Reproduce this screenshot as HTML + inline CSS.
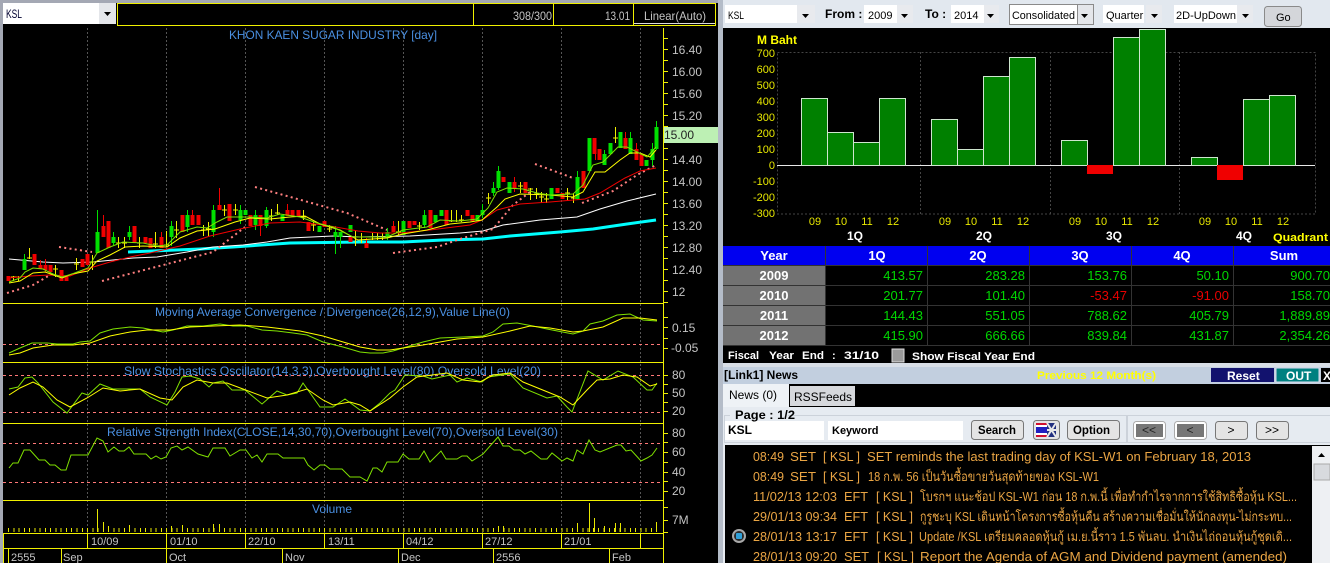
<!DOCTYPE html>
<html><head><meta charset="utf-8"><title>KSL</title>
<style>
html,body{margin:0;padding:0;background:#000;width:1330px;height:563px;overflow:hidden}
svg{display:block;font-family:"Liberation Sans","Noto Sans CJK SC",sans-serif}
.c{shape-rendering:crispEdges}
.t{fill:#4a90e2;font-size:12px}
.ax{fill:#c4c4c4;font-size:12px}
.dt{fill:#c4c4c4;font-size:11px}
.by{fill:#e8e800;font-size:11px}
.ty{fill:#e8e800;font-size:11px}
.q{fill:#fff;font-size:12px;font-weight:bold}
.th{fill:#fff;font-size:13px;font-weight:bold;text-anchor:middle}
.v{fill:#00d800;font-size:13px;text-anchor:end}
.r{fill:#e80000;font-size:13px;text-anchor:end}
.n{fill:#eaa544;font-size:13px}
.b{fill:#000;font-size:12px;font-weight:bold}
.k{fill:#000;font-size:11px}
.f{fill:#fff;font-size:11px;font-weight:bold}
</style></head><body>
<svg width="1330" height="563" viewBox="0 0 1330 563" xmlns="http://www.w3.org/2000/svg">
<rect width="1330" height="563" fill="#000"/>
<!-- frames -->
<g class="c">
<rect width="1330" height="3" fill="#a4a8b4"/>
<rect width="3" height="563" fill="#a4a8b4"/>
<rect x="718" width="5" height="563" fill="#b4bcc8"/>
<rect x="3" y="3" width="113" height="21" fill="#fff"/>
<rect x="99" y="3" width="17" height="21" fill="#e4e6ea"/>
<rect x="117.500" y="3.500" width="598" height="22" fill="none" stroke="#f0f000"/>
<path d="M473.500 3V25M553.500 3V25M633.500 3V25" stroke="#f0f000"/>
<path d="M634 23.500H715" stroke="#ddd"/>
</g>
<path d="M104 12h7l-3.500 4z" fill="#000"/>
<text x="6" y="18" font-size="12" fill="#000030" textLength="16" lengthAdjust="spacingAndGlyphs">KSL</text>
<text x="513" y="20" font-size="12" fill="#c4c4c4" textLength="39" lengthAdjust="spacingAndGlyphs">308/300</text>
<text x="605" y="20" font-size="12" fill="#c4c4c4" textLength="25" lengthAdjust="spacingAndGlyphs">13.01</text>
<text x="644" y="20" font-size="12" fill="#c4c4c4" textLength="62" lengthAdjust="spacingAndGlyphs">Linear(Auto)</text>
<!-- grid -->
<path d="M87.500 28V533M166.500 28V533M245.500 28V533M324.500 28V533M403.500 28V533M482.500 28V533M561.500 28V533M640.500 28V533" stroke="#555" stroke-dasharray="2 2" class="c"/>
<!-- panel lines -->
<path class="c" d="M3 303.500H663M3 362.500H663M3 423.500H663M3 500.500H663M3 533.500H663M3 548.500H663M663.500 28V563M3.500 533V563M8.500 548V563" stroke="#f0f000"/>
<path class="c" d="M87.500 533V548M166.500 533V548M245.500 533V548M324.500 533V548M403.500 533V548M482.500 533V548M561.500 533V548M640.500 533V548M61.500 548V563M166.500 548V563M282.500 548V563M398.500 548V563M493.500 548V563M609.500 548V563" stroke="#f0f000"/>
<path class="c" d="M3 344.500H663M3 375.500H663M3 412.500H663M3 443.500H663M3 482.500H663" stroke="#ff7878" stroke-dasharray="3 3"/>
<!-- axis ticks -->
<path class="c" d="M663 38.500h5M663 49.500h5M663 60.500h5M663 71.500h5M663 82.500h5M663 93.500h5M663 104.500h5M663 115.500h5M663 126.500h5M663 148.500h5M663 159.500h5M663 170.500h5M663 181.500h5M663 192.500h5M663 203.500h5M663 214.500h5M663 225.500h5M663 236.500h5M663 247.500h5M663 258.500h5M663 269.500h5M663 280.500h5M663 291.500h5M663 302.500h5M663 317.500h5M663 327.500h5M663 338.500h5M663 348.500h5M663 375.500h5M663 384.500h5M663 393.500h5M663 402.500h5M663 411.500h5M663 433.500h5M663 442.500h5M663 452.500h5M663 462.500h5M663 472.500h5M663 481.500h5M663 491.500h5M663 507.500h5M663 520.500h5M663 532.500h5" stroke="#f0f000"/>
<g class="ax">
<text x="672" y="54">16.40</text><text x="672" y="76">16.00</text><text x="672" y="98">15.60</text><text x="672" y="120">15.20</text>
<text x="672" y="164">14.40</text><text x="672" y="186">14.00</text><text x="672" y="208">13.60</text><text x="672" y="230">13.20</text><text x="672" y="252">12.80</text><text x="672" y="274">12.40</text><text x="672" y="296">12</text>
<text x="672" y="332">0.15</text><text x="671" y="352">-0.05</text>
<text x="672" y="379">80</text><text x="672" y="397">50</text><text x="672" y="415">20</text>
<text x="672" y="437">80</text><text x="672" y="456">60</text><text x="672" y="476">40</text><text x="672" y="495">20</text><text x="672" y="524">7M</text>
</g>
<rect class="c" x="664" y="127" width="54" height="16" fill="#bdf0b4"/>
<text x="664" y="139" font-size="12" fill="#222">15.00</text>
<!-- titles -->
<g class="t">
<text x="229" y="39" textLength="208" lengthAdjust="spacingAndGlyphs">KHON KAEN SUGAR INDUSTRY [day]</text>
<text x="155" y="316" textLength="355" lengthAdjust="spacingAndGlyphs">Moving Average Convergence / Divergence(26,12,9),Value Line(0)</text>
<text x="124" y="375" textLength="417" lengthAdjust="spacingAndGlyphs">Slow Stochastics Oscillator(14,3,3),Overbought Level(80),Oversold Level(20)</text>
<text x="107" y="436" textLength="451" lengthAdjust="spacingAndGlyphs">Relative Strength Index(CLOSE,14,30,70),Overbought Level(70),Oversold Level(30)</text>
<text x="312" y="513" textLength="40" lengthAdjust="spacingAndGlyphs">Volume</text>
</g>
<!-- dates -->
<g class="dt">
<text x="91" y="545">10/09</text><text x="170" y="545">01/10</text><text x="248" y="545">22/10</text><text x="328" y="545">13/11</text><text x="406" y="545">04/12</text><text x="485" y="545">27/12</text><text x="564" y="545">21/01</text>
<text x="11" y="561">2555</text><text x="63" y="561">Sep</text><text x="169" y="561">Oct</text><text x="285" y="561">Nov</text><text x="401" y="561">Dec</text><text x="496" y="561">2556</text><text x="612" y="561">Feb</text>
</g>
<!-- volume -->
<path class="c" d="M8 530H656" stroke="#e8e800" stroke-width="4" stroke-dasharray="1 4.270"/>
<path class="c" d="M97.500 509V532M103.500 522V532M108.500 526V532M129.500 525V532M171.500 526V532M182.500 525V532M213.500 524V532M219.500 524V532M498.500 526V532M503.500 526V532M577.500 523V532M589.500 503V532M594.500 518V532M604.500 526V532M615.500 523V532M620.500 523V532M656.500 522V532" stroke="#e8e800"/>
<!-- MAs -->
<g fill="none">
<polyline stroke="#00ffff" stroke-width="3" points="128,252 200,249 233,247 290,243 360,242 403,242 443,240 483,239 510,236 560,232 593,229 627,224 656,220"/>
<polyline stroke="#fff" stroke-width="1" points="9,259 43,262 63,263 93,262 133,258 157,257 187,252 213,247 243,245 267,242 290,238 333,236 360,237 410,236 460,233 483,231 503,225 540,220 577,217 600,209 627,201 656,194"/>
<polyline stroke="#ff8080" stroke-width="2" stroke-dasharray="2 3.300" points="7,293 33,285 50,275"/>
<polyline stroke="#ff8080" stroke-width="2" stroke-dasharray="2 3.300" points="59,247 92,252"/>
<polyline stroke="#ff8080" stroke-width="2" stroke-dasharray="2 3.300" points="102,281 213,252 245,227"/>
<polyline stroke="#ff8080" stroke-width="2" stroke-dasharray="2 3.300" points="255,187 347,213 387,230"/>
<polyline stroke="#ff8080" stroke-width="2" stroke-dasharray="2 3.300" points="393,253 437,247 460,239 493,229 503,217 513,205 530,192"/>
<polyline stroke="#ff8080" stroke-width="2" stroke-dasharray="2 3.300" points="535,164 573,178"/>
<polyline stroke="#ff8080" stroke-width="2" stroke-dasharray="2 3.300" points="582,203 613,191 637,175 656,165"/>
</g>
<!-- candles -->
<g class="c" fill="none">
<path stroke="#f0f000" d="M13.500 276V281M11 277h5M18.500 276V281M16 277h5M29.500 248V259M27 258h5M55.500 265V277M53 269h5M76.500 258V270M74 264h5M92.500 255V270M90 262h5M118.500 237V248M116 243h5M124.500 237V248M122 243h5M139.500 237V248M137 243h5M155.500 232V248M153 244h5M166.500 231V247M164 245h5M176.500 221V238M174 230h5M203.500 225V236M201 230h5M208.500 222V236M206 229h5M224.500 205V216M222 210h5M235.500 204V215M233 210h5M271.500 209V221M269 216h5M277.500 204V215M275 213h5M303.500 210V220M301 217h5M313.500 222V231M311 225h5M329.500 225V232M327 229h5M355.500 231V246M353 237h5M361.500 233V243M359 237h5M372.500 233V240M370 237h5M377.500 233V240M375 237h5M382.500 233V240M380 237h5M398.500 221V235M396 232h5M419.500 222V230M417 226h5M451.500 210V222M449 221h5M456.500 210V222M454 221h5M461.500 215V222M459 220h5M488.500 193V204M486 198h5M520.500 182V193M518 186h5M530.500 188V200M528 189h5M536.500 188V199M534 194h5M541.500 192V203M539 197h5M546.500 193V203M544 199h5M567.500 188V200M565 193h5M573.500 193V203M571 198h5M615.500 127V143M613 138h5"/>
<path stroke="#00e000" d="M24.500 254V270M97.500 210V253M113.500 232V245M129.500 226V240M171.500 221V246M187.500 210V232M213.500 205V237M240.500 205V224M255.500 210V230M266.500 207V228M335.500 226V254M340.500 232V248M387.500 228V240M424.500 210V228M482.500 204V218M493.500 182V196M498.500 166V190M577.500 171V200M589.500 138V171M604.500 150V165M620.500 132V148M630.500 132V154M652.500 143V166M656.500 121V150"/>
<path stroke="#00e000" stroke-width="4" d="M24.500 259V270M97.500 232V253M113.500 237V243M129.500 232V237M171.500 226V237M187.500 215V227M213.500 210V232M240.500 210V220M245.500 210V215M255.500 215V225M266.500 210V226M282.500 215V221M319.500 226V232M335.500 232V237M340.500 232V237M350.500 225V232M387.500 232V238M403.500 221V235M424.500 215V225M435.500 215V222M441.500 210V216M477.500 215V221M482.500 210V215M493.500 188V193M498.500 171V188M509.500 182V193M551.500 188V199M577.500 177V199M589.500 138V171M604.500 154V165M610.500 143V154M620.500 132V148M630.500 138V154M646.500 160V166M652.500 149V160M656.500 127V149"/>
<path stroke="#f00000" d="M34.500 254V265M40.500 260V269M45.500 259V272M103.500 215V237M161.500 232V248M192.500 210V225M219.500 188V210M260.500 215V236M287.500 204V216M366.500 238V248M393.500 221V232M514.500 177V192M595.500 138V160M625.500 132V149M636.500 143V160"/>
<path stroke="#f00000" stroke-width="4" d="M8.500 276V281M34.500 254V265M40.500 265V269M45.500 265V270M50.500 265V272M61.500 270V281M66.500 276V281M82.500 259V267M87.500 254V265M103.500 226V237M108.500 221V248M134.500 226V243M145.500 237V243M150.500 238V248M161.500 237V248M182.500 215V232M192.500 215V225M198.500 215V225M219.500 205V210M229.500 204V221M250.500 215V226M260.500 215V226M287.500 210V216M292.500 210V216M298.500 210V216M308.500 222V231M324.500 221V227M350.500 237V242M366.500 243V248M393.500 226V232M409.500 221V228M414.500 221V225M430.500 210V228M446.500 210V225M467.500 210V216M472.500 215V221M503.500 177V182M514.500 182V188M525.500 182V193M557.500 188V193M562.500 193V199M583.500 171V188M594.500 138V154M599.500 149V160M625.500 138V149M636.500 149V160M641.500 154V166"/>
</g>
<g fill="none" stroke-width="1">
<polyline stroke="#f00000" points="9,278 30,276 50,275 70,276 90,268 110,262 130,257 150,253 180,246 210,236 240,229 270,223 300,222 330,226 358,231 380,233 400,233 430,230 470,225 482,220 497,210 520,204 550,202 585,199 600,193 625,178 640,171 656,168"/>
<polyline stroke="#ffff00" points="9,283 20,281 33,273 45,272 62,278 72,274 88,271 97,261 110,255 125,247 143,246 167,247 180,238 197,231 215,229 235,222 250,218 270,219 290,217 305,216 320,224 340,230 358,240 387,238 403,234 427,230 450,224 470,222 482,220 497,207 505,199 520,194 550,195 573,197 583,192 595,172 605,172 620,160 630,153 640,153 650,157 656,150"/>
<polyline stroke="#7fe000" points="9,282 20,278 25,272 33,268 43,269 53,274 62,277 72,274 88,268 97,253 110,247 123,242 143,243 157,246 167,245 180,232 197,227 207,228 217,222 227,217 247,217 267,218 280,214 300,217 317,223 333,227 353,237 387,237 403,230 427,227 440,220 460,221 477,219 488,208 497,192 507,188 523,189 537,193 550,195 573,194 583,185 593,165 603,162 618,147 627,147 637,152 647,157 656,147"/>
<!-- MACD -->
<polyline stroke="#7fe000" points="9,353 20,348 32,343 47,343 57,344 73,344 80,342 90,341 100,333 113,329 130,327 143,328 163,332 173,330 187,326 203,326 220,324 233,326 247,326 262,330 277,331 293,333 307,335 323,342 343,347 360,352 370,353 383,353 393,351 403,348 423,342 440,338 463,337 483,336 493,332 503,324 517,323 533,326 547,329 573,334 583,331 590,324 603,321 617,315 630,314 643,320 657,321"/>
<polyline stroke="#ffff00" points="9,355 20,353 33,348 53,345 73,345 90,343 110,336 130,332 147,330 170,330 190,327 213,326 240,325 267,327 300,331 323,336 360,347 377,350 390,350 423,345 457,339 483,337 510,331 530,326 550,328 573,332 583,331 603,327 623,318 640,318 657,320"/>
<!-- Stoch -->
<polyline stroke="#7fe000" points="9,389 18,387 25,378 32,377 38,383 53,402 67,413 82,393 88,395 100,384 113,389 140,389 150,397 167,405 175,392 182,377 190,376 200,379 209,387 213,383 223,381 232,390 245,390 262,404 277,391 287,395 297,393 303,383 320,407 333,407 345,399 360,410 370,411 380,403 390,393 395,390 405,375 423,376 432,379 450,375 457,382 467,378 482,382 488,377 510,374 523,388 547,398 557,396 567,407 572,412 588,371 603,380 618,371 633,377 647,390 652,390 657,383"/>
<polyline stroke="#ffff00" points="9,395 20,388 33,382 43,387 57,400 70,407 87,398 103,388 120,391 140,389 160,398 172,400 183,387 197,380 213,383 227,383 243,389 267,398 287,395 307,389 323,400 333,405 350,402 360,405 370,411 390,398 403,387 417,377 447,373 463,380 480,382 493,375 510,373 523,382 560,397 573,405 587,390 597,380 610,379 623,375 637,377 650,386 657,384"/>
<!-- RSI -->
<polyline stroke="#7fe000" points="9,468 13,463 18,463 24,450 30,450 39,460 45,460 50,465 55,465 61,470 66,470 71,455 88,455 97,438 103,441 108,452 114,447 119,451 124,451 129,447 134,454 146,454 151,459 156,456 161,459 166,457 171,448 177,446 182,450 188,447 198,454 208,457 213,448 225,448 230,456 240,450 246,450 252,458 257,455 262,462 267,454 278,454 283,458 304,458 308,465 314,470 320,465 325,465 330,469 342,469 350,477 360,477 367,481 373,468 377,468 382,472 387,462 398,462 403,454 409,459 419,459 424,451 430,462 441,451 446,459 457,459 462,456 467,456 472,461 483,454 498,437 503,446 509,446 514,450 520,450 525,454 531,451 541,459 547,459 552,453 562,461 567,458 573,461 577,450 583,454 589,440 595,450 600,452 617,445 621,445 626,451 631,450 641,461 647,458 652,455 657,448"/>
</g>

<!-- RIGHT PANEL -->
<g class="c">
<rect x="723" width="607" height="28" fill="#e2e8ef"/>
<rect x="725" y="5" width="72" height="18" fill="#fff"/>
<rect x="797" y="5" width="18" height="18" fill="#e8eaee"/>
<rect x="864" y="5" width="33" height="18" fill="#fff"/>
<rect x="897" y="5" width="16" height="18" fill="#e8eaee"/>
<rect x="951" y="5" width="33" height="18" fill="#fff"/>
<rect x="984" y="5" width="15" height="18" fill="#e8eaee"/>
<rect x="1009.500" y="4.500" width="84" height="20" fill="#fff" stroke="#8a8a8a"/>
<rect x="1077" y="5" width="16" height="19" fill="#e4e6ea"/>
<path d="M1077.500 5V24" stroke="#8a8a8a"/>
<rect x="1103" y="5" width="41" height="18" fill="#fff"/>
<rect x="1146" y="5" width="16" height="18" fill="#e8eaee"/>
<rect x="1174" y="5" width="63" height="18" fill="#fff"/>
<rect x="1237" y="5" width="16" height="18" fill="#e8eaee"/>
</g>
<rect x="1264.500" y="6.500" width="37" height="20" rx="3" fill="#d4d6da" stroke="#8a8a8a"/>
<path d="M802 14h7l-3.500 4zM901 14h7l-3.500 4zM987 14h7l-3.500 4zM1081 14h7l-3.500 4zM1151 14h7l-3.500 4zM1242 14h7l-3.500 4z" fill="#000"/>
<text x="728" y="19" class="k" font-size="12" textLength="16" lengthAdjust="spacingAndGlyphs">KSL</text>
<text x="825" y="18" class="b">From :</text>
<text x="868" y="19" class="k">2009</text>
<text x="925" y="18" class="b">To :</text>
<text x="954" y="19" class="k">2014</text>
<text x="1012" y="19" class="k" textLength="63" lengthAdjust="spacingAndGlyphs">Consolidated</text>
<text x="1106" y="19" class="k">Quarter</text>
<text x="1176" y="19" class="k" textLength="60" lengthAdjust="spacingAndGlyphs">2D-UpDown</text>
<text x="1276" y="21" class="k">Go</text>
<!-- bar chart -->
<rect class="c" x="777.500" y="52.500" width="538" height="161.500" fill="none" stroke="#444" stroke-dasharray="2 2"/>
<path class="c" d="M920.500 52V214M1050.500 52V214M1179.500 52V214" stroke="#444" stroke-dasharray="2 2"/>
<path class="c" d="M777 165.500H1315" stroke="#e8e8e8"/>
<g class="c" fill="#008000" stroke="#cfe6cf">
<rect x="801.500" y="98.500" width="26" height="67"/><rect x="827.500" y="132.500" width="26" height="33"/><rect x="853.500" y="142.500" width="26" height="23"/><rect x="879.500" y="98.500" width="26" height="67"/>
<rect x="931.500" y="119.500" width="26" height="46"/><rect x="957.500" y="149.500" width="26" height="16"/><rect x="983.500" y="76.500" width="26" height="89"/><rect x="1009.500" y="57.500" width="26" height="108"/>
<rect x="1061.500" y="140.500" width="26" height="25"/><rect x="1113.500" y="37.500" width="26" height="128"/><rect x="1139.500" y="29.500" width="26" height="136"/>
<rect x="1191.500" y="157.500" width="26" height="8"/><rect x="1243.500" y="99.500" width="26" height="66"/><rect x="1269.500" y="95.500" width="26" height="70"/>
</g>
<rect class="c" x="1087" y="165" width="26" height="9" fill="#f00000"/>
<rect class="c" x="1217" y="165" width="26" height="15" fill="#f00000"/>
<text x="757" y="44" font-size="12" font-weight="bold" fill="#ffff00">M Baht</text>
<g class="by" text-anchor="end">
<text x="775" y="57">700</text><text x="775" y="73">600</text><text x="775" y="89">500</text><text x="775" y="105">400</text><text x="775" y="121">300</text><text x="775" y="137">200</text><text x="775" y="153">100</text><text x="775" y="169">0</text><text x="775" y="185">-100</text><text x="775" y="201">-200</text><text x="775" y="217">-300</text>
</g>
<g class="ty" text-anchor="middle">
<text x="815" y="225">09</text><text x="841" y="225">10</text><text x="867" y="225">11</text><text x="893" y="225">12</text>
<text x="945" y="225">09</text><text x="971" y="225">10</text><text x="997" y="225">11</text><text x="1023" y="225">12</text>
<text x="1075" y="225">09</text><text x="1101" y="225">10</text><text x="1127" y="225">11</text><text x="1153" y="225">12</text>
<text x="1205" y="225">09</text><text x="1231" y="225">10</text><text x="1257" y="225">11</text><text x="1283" y="225">12</text>
</g>
<text x="847" y="240" class="q">1Q</text><text x="976" y="240" class="q">2Q</text><text x="1106" y="240" class="q">3Q</text><text x="1236" y="240" class="q">4Q</text>
<text x="1273" y="241" font-size="11" font-weight="bold" fill="#ffff00" textLength="55" lengthAdjust="spacingAndGlyphs">Quadrant</text>
<!-- table -->
<g class="c">
<rect x="723" y="246" width="607" height="19" fill="#0000f0"/>
<rect x="723" y="266" width="102" height="19" fill="#727272"/>
<rect x="723" y="286" width="102" height="19" fill="#727272"/>
<rect x="723" y="306" width="102" height="19" fill="#727272"/>
<rect x="723" y="326" width="102" height="19" fill="#727272"/>
<path d="M825.500 246V345M927.500 246V345M1029.500 246V345M1131.500 246V345M1233.500 246V345" stroke="#333"/>
<path d="M723 265.500H1330M723 285.500H1330M723 305.500H1330M723 325.500H1330M723 345.500H1330" stroke="#333"/>
</g>
<g class="th">
<text x="774" y="260">Year</text><text x="877" y="260">1Q</text><text x="978" y="260">2Q</text><text x="1080" y="260">3Q</text><text x="1182" y="260">4Q</text><text x="1284" y="260">Sum</text>
<text x="774" y="280">2009</text><text x="774" y="300">2010</text><text x="774" y="320">2011</text><text x="774" y="340">2012</text>
</g>
<g class="v">
<text x="923" y="280">413.57</text><text x="1025" y="280">283.28</text><text x="1127" y="280">153.76</text><text x="1229" y="280">50.10</text><text x="1330" y="280">900.70</text>
<text x="923" y="300">201.77</text><text x="1025" y="300">101.40</text><text x="1330" y="300">158.70</text>
<text x="923" y="320">144.43</text><text x="1025" y="320">551.05</text><text x="1127" y="320">788.62</text><text x="1229" y="320">405.79</text><text x="1330" y="320">1,889.89</text>
<text x="923" y="340">415.90</text><text x="1025" y="340">666.66</text><text x="1127" y="340">839.84</text><text x="1229" y="340">431.87</text><text x="1330" y="340">2,354.26</text>
</g>
<text x="1127" y="300" class="r">-53.47</text><text x="1229" y="300" class="r">-91.00</text>
<g class="f">
<text x="728" y="359" textLength="31" lengthAdjust="spacingAndGlyphs">Fiscal</text>
<text x="769" y="359" textLength="25" lengthAdjust="spacingAndGlyphs">Year</text>
<text x="802" y="359" textLength="22" lengthAdjust="spacingAndGlyphs">End</text>
<text x="832" y="359">:</text>
<text x="844" y="359" textLength="35" lengthAdjust="spacingAndGlyphs">31/10</text>
<text x="912" y="360" textLength="123" lengthAdjust="spacingAndGlyphs">Show Fiscal Year End</text>
</g>
<rect class="c" x="892" y="349" width="12" height="13" fill="#9a9a9a" stroke="#ddd"/>
<!-- news -->
<g class="c">
<rect x="723" y="363" width="607" height="4" fill="#d8dee6"/>
<rect x="723" y="367" width="607" height="17" fill="#c2cfdf"/>
<rect x="1211" y="368" width="63" height="14" fill="#12126e"/>
<rect x="1276" y="368" width="43" height="14" fill="#008080" stroke="#dde"/>
<rect x="1321" y="368" width="9" height="14" fill="#000"/>
<rect x="723" y="407" width="607" height="38" fill="#e6ebf1"/>
<rect x="723" y="384" width="66" height="23" fill="#eef2f6"/>
<rect x="790" y="386" width="65" height="20" fill="#d6d8dc"/>
<rect x="724.500" y="415.500" width="402" height="27" fill="none" stroke="#ccd2da"/>
<rect x="1127.500" y="415.500" width="210" height="27" fill="none" stroke="#ccd2da"/>
<rect x="730" y="410" width="58" height="9" fill="#e6ebf1"/>
<rect x="725" y="421" width="99" height="19" fill="#fff"/>
<rect x="828" y="421" width="135" height="19" fill="#fff"/>
</g>
<text x="724" y="379" class="b">[Link1] News</text>
<text x="1037" y="379" font-size="11" font-weight="bold" fill="#ffff00" textLength="119" lengthAdjust="spacingAndGlyphs">Previous 12 Month(s)</text>
<text x="1227" y="380" font-size="12" font-weight="bold" fill="#fff">Reset</text>
<text x="1286" y="380" font-size="12" font-weight="bold" fill="#fff">OUT</text>
<text x="1323" y="380" font-size="12" font-weight="bold" fill="#fff">X</text>
<text x="729" y="399" font-size="12" fill="#000">News (0)</text>
<text x="794" y="401" font-size="12" fill="#000" textLength="58" lengthAdjust="spacingAndGlyphs">RSSFeeds</text>
<text x="735" y="419" font-size="12" font-weight="bold" fill="#000" textLength="60" lengthAdjust="spacingAndGlyphs">Page : 1/2</text>
<text x="728" y="434" class="b">KSL</text>
<text x="832" y="434" class="b" style="font-size:11px">Keyword</text>
<g fill="#e4e4e4" stroke="#777">
<rect x="971.500" y="420.500" width="52" height="19" rx="3"/>
<rect x="1033.500" y="420.500" width="26" height="19" rx="3"/>
<rect x="1067.500" y="420.500" width="52" height="19" rx="3"/>
<rect x="1133.500" y="421.500" width="32" height="18" rx="3" fill="#fff" stroke="#aaa"/>
<rect x="1174.500" y="421.500" width="32" height="18" rx="3" fill="#fff" stroke="#aaa"/>
<rect x="1215.500" y="421.500" width="32" height="18" rx="3"/>
<rect x="1256.500" y="421.500" width="32" height="18" rx="3"/>
</g>
<rect class="c" x="1136" y="424" width="27" height="13" fill="#777"/>
<rect class="c" x="1177" y="424" width="27" height="13" fill="#777"/>
<text x="978" y="434" class="b" textLength="38" lengthAdjust="spacingAndGlyphs">Search</text>
<text x="1073" y="434" class="b" textLength="37" lengthAdjust="spacingAndGlyphs">Option</text>
<text x="1149" y="434" text-anchor="middle" font-size="12" fill="#222">&lt;&lt;</text>
<text x="1190" y="434" text-anchor="middle" font-size="12" fill="#222">&lt;</text>
<text x="1231" y="434" text-anchor="middle" font-size="12" fill="#000">&gt;</text>
<text x="1272" y="434" text-anchor="middle" font-size="12" fill="#000">&gt;&gt;</text>
<!-- flag -->
<g class="c">
<rect x="1036" y="423" width="13" height="14" fill="#fff"/>
<rect x="1036" y="423" width="13" height="2" fill="#d01030"/><rect x="1036" y="435" width="13" height="2" fill="#d01030"/>
<rect x="1036" y="427" width="13" height="6" fill="#2020c0"/>
<rect x="1047" y="423" width="9" height="14" fill="#223080"/>
</g>
<path d="M1047 423l9 14M1056 423l-9 14M1047 430h9" stroke="#e8e8e8" stroke-width="2"/>
<!-- list -->
<rect class="c" x="723" y="445" width="2" height="118" fill="#e6ebf1"/>
<rect class="c" x="1312" y="446" width="18" height="117" fill="#eef0f3"/>
<rect class="c" x="1314" y="464" width="16" height="16" fill="#d8dade" stroke="#aaa"/>
<path d="M1318 457h7l-3.500-4z" fill="#000"/>
<g class="n">
<text x="753" y="461" textLength="31" lengthAdjust="spacingAndGlyphs">08:49</text><text x="790" y="461" textLength="26" lengthAdjust="spacingAndGlyphs">SET</text><text x="823" y="461" xml:space="preserve" textLength="37" lengthAdjust="spacingAndGlyphs">[ KSL ]</text>
<text x="867" y="461" textLength="384" lengthAdjust="spacingAndGlyphs">SET reminds the last trading day of KSL-W1 on February 18, 2013</text>
<text x="753" y="481" textLength="31" lengthAdjust="spacingAndGlyphs">08:49</text><text x="790" y="481" textLength="26" lengthAdjust="spacingAndGlyphs">SET</text><text x="823" y="481" xml:space="preserve" textLength="37" lengthAdjust="spacingAndGlyphs">[ KSL ]</text>
<text x="868" y="481" textLength="231" lengthAdjust="spacingAndGlyphs">18 ก.พ. 56 เป็นวันซื้อขายวันสุดท้ายของ KSL-W1</text>
<text x="753" y="501" textLength="84" lengthAdjust="spacingAndGlyphs">11/02/13 12:03</text><text x="844" y="501" textLength="24" lengthAdjust="spacingAndGlyphs">EFT</text><text x="876" y="501" xml:space="preserve" textLength="37" lengthAdjust="spacingAndGlyphs">[ KSL ]</text>
<text x="920" y="501" textLength="377" lengthAdjust="spacingAndGlyphs">โบรกฯ แนะช้อป KSL-W1 ก่อน 18 ก.พ.นี้ เพื่อทำกำไรจากการใช้สิทธิซื้อหุ้น KSL...</text>
<text x="753" y="521" textLength="84" lengthAdjust="spacingAndGlyphs">29/01/13 09:34</text><text x="844" y="521" textLength="24" lengthAdjust="spacingAndGlyphs">EFT</text><text x="876" y="521" xml:space="preserve" textLength="37" lengthAdjust="spacingAndGlyphs">[ KSL ]</text>
<text x="920" y="521" textLength="372" lengthAdjust="spacingAndGlyphs">กูรูชะบุ KSL เดินหน้าโครงการซื้อหุ้นคืน สร้างความเชื่อมั่นให้นักลงทุน-ไม่กระทบ...</text>
<text x="753" y="541" textLength="84" lengthAdjust="spacingAndGlyphs">28/01/13 13:17</text><text x="844" y="541" textLength="24" lengthAdjust="spacingAndGlyphs">EFT</text><text x="876" y="541" xml:space="preserve" textLength="37" lengthAdjust="spacingAndGlyphs">[ KSL ]</text>
<text x="919" y="541" textLength="373" lengthAdjust="spacingAndGlyphs">Update /KSL เตรียมคลอดหุ้นกู้ เม.ย.นี้ราว 1.5 พันลบ. นำเงินไถ่ถอนหุ้นกู้ชุดเดิ...</text>
<text x="753" y="561" textLength="84" lengthAdjust="spacingAndGlyphs">28/01/13 09:20</text><text x="844" y="561" textLength="25" lengthAdjust="spacingAndGlyphs">SET</text><text x="877" y="561" xml:space="preserve" textLength="37" lengthAdjust="spacingAndGlyphs">[ KSL ]</text>
<text x="920" y="561" textLength="367" lengthAdjust="spacingAndGlyphs">Report the Agenda of AGM and Dividend payment (amended)</text>
</g>
<circle cx="739" cy="536" r="7" fill="#a8a8a8"/><circle cx="739" cy="536" r="5" fill="#2a2a2a"/><rect x="736" y="533" width="6" height="6" rx="1" fill="#30a0d8"/>
</svg>
</body></html>
